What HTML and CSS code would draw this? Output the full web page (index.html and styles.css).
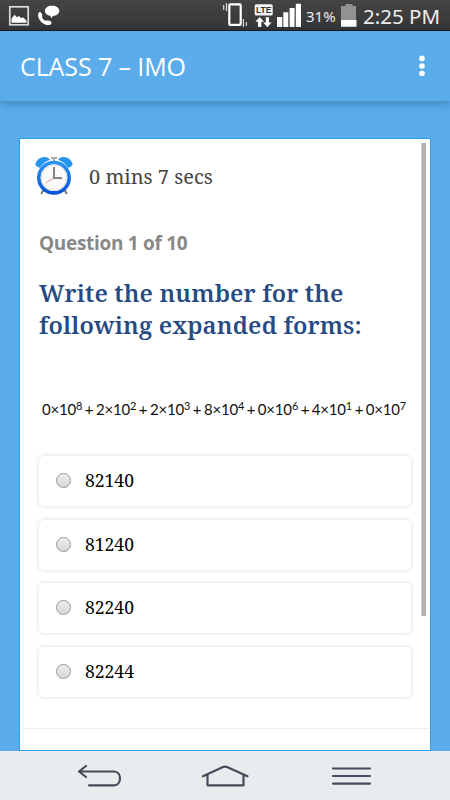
FILE: index.html
```html
<!DOCTYPE html>
<html lang="en">
<head>
    <meta charset="UTF-8">
    <meta name="viewport" content="width=device-width, initial-scale=1.0">
    <title>Class 7 - IMO</title>
    <link rel="stylesheet" href="styles.css">
</head>
<body>
    <div class="status-bar">
        <svg class="status-left" width="70" height="31" viewBox="0 0 70 31">
            <rect x="9.8" y="6.8" width="18.4" height="18" fill="none" stroke="#ddd" stroke-width="1.7"/>
            <path d="M11.5 22.8v-4l3-4 2.5 2.5 2-1.2 2 2 2.5-.6 3 3.300v2z" fill="#fff"/>
            <path d="M39.3 12c1.8-.4 3 1.7 3 4-.8 1 .5 3.5 2.6 4.7 1.6-.6 6.2-.3 6.7 1.7.4 1.6-1.8 2.9-4.1 2.7-5.7-.5-12.1-8.7-8.2-13.1z" fill="#fff"/>
            <path d="M52 5.8c4 0 7.3 2 7.3 5s-3 5.2-6.300 5.200l-1.800 2.200-.7-2.300c-3.100-.5-5.600-2.300-5.600-5.100 0-2.900 3.100-5 7.100-5z" fill="#fff"/>
        </svg>
        <svg class="status-signal" width="84" height="31" viewBox="0 0 84 31">
            <rect x="9.3" y="4.3" width="11.4" height="20.6" rx="1" fill="none" stroke="#fff" stroke-width="2.2"/>
            <path d="M3.7 5v5M6.5 3v8M23.4 19v8M26.3 22v4" stroke="#ddd" stroke-width="1.2"/>
            <rect x="34.7" y="4.2" width="18" height="11.3" rx="1.5" fill="#f4f4f4"/>
            <text class="lte" x="43.7" y="13.2" text-anchor="middle">LTE</text>
            <path d="M39.7 17l4.3 4.8h-2.6V27H38v-5.2h-2.6zM47.4 27.3l-4.2-4.8h2.6v-5.2H49v5.2h2.6z" fill="#fff"/>
            <path d="M57 17h5.3v10H57zM63.3 12.3h5v14.7h-5zM69.6 8h5v19h-5zM75.8 3.7H81V27h-5.2z" fill="#fff"/>
        </svg>
        <span class="percent">31%</span>
        <svg class="battery" width="16" height="31" viewBox="0 0 16 31">
            <path d="M4.5 4h7v2H15v14H0V6h4.5z" fill="#929292"/>
            <path d="M0 20h15.5v6.8H0z" fill="#fff"/>
        </svg>
        <span class="clock">2:25 PM</span>
    </div>

    <div class="app-bar">
        <h1>CLASS 7 – IMO</h1>
        <svg width="6" height="22" viewBox="0 0 6 22" fill="#fff">
            <circle cx="3" cy="3.4" r="2.8"/>
            <circle cx="3" cy="11" r="2.8"/>
            <circle cx="3" cy="18.5" r="2.8"/>
        </svg>
    </div>

    <div class="content">
        <div class="card">
            <div class="scrollbar"></div>
            <div class="timer">
                <svg width="38" height="40" viewBox="0 0 38 40">
                    <defs>
                        <linearGradient id="ring" x1="0" y1="0" x2="0" y2="1">
                            <stop offset="0" stop-color="#2a93f4"/>
                            <stop offset="1" stop-color="#0754d8"/>
                        </linearGradient>
                    </defs>
                    <path d="M8.5 34l-2.3 4M29.5 34l2.3 4" stroke="#777" stroke-width="2"/>
                    <path d="M16 2h6M19 2v5" stroke="#aaa" stroke-width="2"/>
                    <path d="M.3 8.5C1 4 5.500.8 10 1c2 .1 4.300 1.200 5 2.800-4.500 1.500-8 4.600-9.800 8C3.500 11.500 1.200 10.500.3 8.500z" fill="#2595ee"/>
                    <path d="M37.700 8.500C37 4 32.500.8 28 1c-2 .1-4.300 1.200-5 2.800 4.500 1.500 8 4.600 9.800 8 1.700-.3 4-1.300 4.900-3.300z" fill="#2595ee"/>
                    <circle cx="19" cy="21.7" r="15.2" fill="#fafafa" stroke="url(#ring)" stroke-width="3.6"/>
                    <circle cx="19" cy="21.7" r="12.8" fill="none" stroke="#dedede"/>
                    <path d="M19 22l-8.500 5" stroke="#f49a96"/>
                    <path d="M19 11v11h8" fill="none" stroke="#858585" stroke-width="2"/>
                </svg>
                <span class="time">0 mins 7 secs</span>
            </div>
            <div class="progress">Question 1 of 10</div>
            <h2 class="question">Write the number for the<br>following expanded forms:</h2>
            <div class="formula">0×10<sup>8</sup> + 2×10<sup>2</sup> + 2×10<sup>3</sup> + 8×10<sup>4</sup> + 0×10<sup>6</sup> + 4×10<sup>1</sup> + 0×10<sup>7</sup></div>
            <div class="options">
                <label class="option"><input type="radio" name="answer">82140</label>
                <label class="option"><input type="radio" name="answer">81240</label>
                <label class="option"><input type="radio" name="answer">82240</label>
                <label class="option"><input type="radio" name="answer">82244</label>
            </div>
            <div class="divider"></div>
        </div>
    </div>

    <div class="nav-bar">
        <svg width="450" height="49" viewBox="0 0 450 49" fill="none" stroke="#464b59" stroke-width="2.2" stroke-linecap="round" stroke-linejoin="round">
            <path d="M86 15l-7 5.5 7 5.5M80 20.5h34c8 0 8 13.8 0 13.8H89"/>
            <path d="M203 25.3l20-9.2q2-.8 4 0l20.5 9.2M207.5 24v10.3h36V24"/>
            <path d="M333 17.5h37M333 25h37M333 32.6h37"/>
        </svg>
    </div>
</body>
</html>
```

FILE: styles.css
```css
* {
    box-sizing: border-box;
}

body {
    display: flex;
    flex-direction: column;
    height: 800px;
    margin: 0;
    overflow: hidden;
    background-color: #5baceb;
    font-family: "Noto Serif", "Droid Serif", "DejaVu Serif Condensed", "DejaVu Serif", serif;
    white-space: nowrap;
}

.status-bar {
    display: flex;
    height: 31px;
    background: linear-gradient(#444, #363636);
    border-bottom: 1px solid #1d1416;
    color: #eee;
    font-family: "Noto Sans", sans-serif;
    line-height: 32px;
}

.status-signal {
    margin-left: 150px;
}

.lte {
    font: bold 8.5px "Liberation Sans", sans-serif;
    fill: #333;
}

.percent {
    width: 35px;
    padding-left: 2px;
    font-size: 15px;
}

.battery {
    margin-left: 2px;
}

.clock {
    margin-left: 6px;
    font-size: 20.5px;
}

.app-bar {
    display: flex;
    align-items: center;
    justify-content: space-between;
    height: 71px;
    padding: 0 25px 0 20px;
    color: #fff;
    box-shadow: 0 1px 9px rgba(0, 40, 80, 0.35);
    border-bottom: 1px solid #4f95cb;
}

h1 {
    margin: 0;
    font: 25px "Open Sans", sans-serif;
    letter-spacing: -0.1px;
}

.content {
    flex: 1;
    padding: 36px 19px 0;
}

.card {
    position: relative;
    height: 613px;
    padding: 17px 18px 0 19px;
    background-color: #fff;
    border: 1px solid #2ea0ea;
}

.scrollbar {
    position: absolute;
    top: 4px;
    right: 4px;
    width: 5px;
    height: 473px;
    background-color: #b2b2b2;
    border-left: 1px solid #d2d2d2;
}

.timer {
    display: flex;
    height: 42px;
    margin-left: -4px;
}

.time {
    margin-left: 16px;
    color: #444;
    font-size: 20px;
    line-height: 42px;
}

.progress {
    height: 28px;
    margin-top: 31px;
    color: #888;
    font: bold 19px/28px "Open Sans", sans-serif;
    letter-spacing: -0.3px;
}

.question {
    height: 64px;
    margin: 20px 0 0;
    color: #264b84;
    font-size: 24px;
    font-weight: 600;
    line-height: 31.5px;
    letter-spacing: 0.13px;
}

.formula {
    height: 26px;
    margin: 55px 0 0 3px;
    color: #111;
    font: 15px/26px Lato, sans-serif;
    letter-spacing: -0.2px;
    word-spacing: -1px;
}

.formula sup {
    font-size: 11px;
    line-height: 0;
    vertical-align: 5px;
}

.options {
    display: flex;
    flex-direction: column;
    gap: 13.7px;
    margin-top: 34px;
}

.option {
    display: flex;
    align-items: center;
    width: 372px;
    height: 50px;
    padding: 0 0 1px 17px;
    border-radius: 5px;
    box-shadow: 0 0 4px rgba(0, 0, 0, 0.16);
    font-size: 17.5px;
    line-height: 23px;
}

.option input {
    appearance: none;
    width: 15px;
    height: 15px;
    margin: 0 14px 0 0;
    border: 1px solid #999;
    border-radius: 50%;
    background: linear-gradient(#eee, #d6d6d6);
}

.divider {
    height: 1px;
    margin: 31px -17px 0;
    background-color: #eee;
}

.nav-bar {
    height: 49px;
    background-color: #e8ecef;
}
```
